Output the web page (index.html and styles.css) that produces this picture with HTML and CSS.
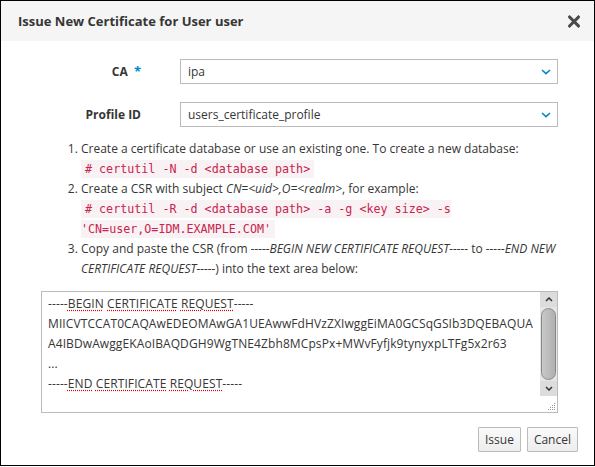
FILE: index.html
```html
<!DOCTYPE html>
<html>
<head>
<meta charset="utf-8">
<link rel="stylesheet" href="styles.css">
</head>
<body>
<div class="dialog">
  <div class="header">
    <h1 class="title">Issue New Certificate for User user</h1>
    <svg class="close" width="12" height="13" viewBox="0 0 12 13"><path d="M1.6 2.1 L10.4 10.9 M10.4 2.1 L1.6 10.9" stroke="#4a4a4a" stroke-width="3" stroke-linecap="square"/></svg>
  </div>
  <div class="body">
    <div class="row">
      <div class="label">CA <span class="req">*</span></div>
      <div class="select"><span>ipa</span><svg class="chev" width="10" height="6" viewBox="0 0 10 6"><path d="M1 1 L5 4.6 L9 1" fill="none" stroke="#0088ce" stroke-width="1.6"/></svg></div>
    </div>
    <div class="row">
      <div class="label">Profile ID</div>
      <div class="select"><span>users_certificate_profile</span><svg class="chev" width="10" height="6" viewBox="0 0 10 6"><path d="M1 1 L5 4.6 L9 1" fill="none" stroke="#0088ce" stroke-width="1.6"/></svg></div>
    </div>
    <ol class="steps">
      <li>Create a certificate database or use an existing one. To create a new database:<br><code># certutil -N -d &lt;database path&gt;</code></li>
      <li>Create a CSR with subject <em>CN=&lt;uid&gt;,O=&lt;realm&gt;</em>, for example:<br><code># certutil -R -d &lt;database path&gt; -a -g &lt;key size&gt; -s 'CN=user,O=IDM.EXAMPLE.COM'</code></li>
      <li>Copy and paste the CSR (from <em>-----BEGIN NEW CERTIFICATE REQUEST-----</em> to <em>-----END NEW CERTIFICATE REQUEST-----</em>) into the text area below:</li>
    </ol>
    <div class="textarea-wrap">
      <div class="textarea">
        <div>-----<span class="sp">BEGIN</span> <span class="sp">CERTIFICATE</span> <span class="sp">REQUEST</span>-----</div>
        <div>MIICVTCCAT0CAQAwEDEOMAwGA1UEAwwFdHVzZXIwggEiMA0GCSqGSIb3DQEBAQUA</div>
        <div>A4IBDwAwggEKAoIBAQDGH9WgTNE4Zbh8MCpsPx+MWvFyfjk9tynyxpLTFg5x2r63</div>
        <div>...</div>
        <div>-----<span class="sp">END</span> <span class="sp">CERTIFICATE</span> <span class="sp">REQUEST</span>-----</div>
      </div>
      <div class="scrollbar">
        <div class="sb-btn"><svg width="8" height="5" viewBox="0 0 8 5"><path d="M1 4 L4 1 L7 4" fill="none" stroke="#333" stroke-width="1.5"/></svg></div>
        <div class="sb-track"><div class="sb-thumb"></div></div>
        <div class="sb-btn"><svg width="8" height="5" viewBox="0 0 8 5"><path d="M1 1 L4 4 L7 1" fill="none" stroke="#333" stroke-width="1.5"/></svg></div>
        <div class="sb-corner"><svg width="8" height="8" viewBox="0 0 8 8"><g fill="#999"><rect x="6" y="0" width="1" height="1"/><rect x="4" y="2" width="1" height="1"/><rect x="6" y="2" width="1" height="1"/><rect x="2" y="4" width="1" height="1"/><rect x="4" y="4" width="1" height="1"/><rect x="6" y="4" width="1" height="1"/><rect x="0" y="6" width="1" height="1"/><rect x="2" y="6" width="1" height="1"/><rect x="4" y="6" width="1" height="1"/><rect x="6" y="6" width="1" height="1"/></g></svg></div>
      </div>
    </div>
  </div>
  <div class="footer">
    <button class="btn">Issue</button>
    <button class="btn">Cancel</button>
  </div>
</div>
</body>
</html>
```

FILE: styles.css
```css
* { box-sizing: border-box; }
html, body { margin: 0; padding: 0; background: #fff; }
body {
  font-family: "Open Sans", "Liberation Sans", sans-serif;
  font-size: 12px;
  line-height: 20px;
  color: #363636;
}
.dialog {
  width: 595px;
  height: 466px;
  border: 1px solid #000;
  display: flex;
  flex-direction: column;
}
.header {
  height: 40px;
  background: #f5f5f5;
  display: flex;
  align-items: center;
  justify-content: space-between;
  padding: 0 14px 0 17px;
  flex: none;
}
.title {
  margin: 0;
  font-size: 13px;
  font-weight: 700;
  color: #363636;
}
.close { display: block; }
.body {
  flex: 1;
  padding: 18px 36px 0 40px;
  display: flex;
  flex-direction: column;
}
.row {
  display: flex;
  align-items: center;
  margin-bottom: 18px;
}
.label {
  width: 139px;
  padding-right: 39px;
  text-align: right;
  font-weight: 700;
  white-space: nowrap;
}
.req { color: #0088ce; font-size: 13px; margin-left: 3px; }
.select {
  flex: 1;
  height: 25px;
  border: 1px solid #bbb;
  display: flex;
  align-items: center;
  justify-content: space-between;
  padding: 0 6px 0 7px;
  background: #fff;
}
.chev { display: block; }
.steps {
  margin: -6px 0 0 0;
  padding: 0 0 0 40px;
}
.steps li { padding-left: 0; }
code {
  font-family: "DejaVu Sans Mono", "Liberation Mono", monospace;
  font-size: 11.7px;
  color: #c7254e;
  background: #f9f2f4;
  padding: 2px 4px;
  line-height: 20px;
}
em { font-style: italic; }
.textarea-wrap {
  position: relative;
  margin-top: 12px;
  height: 122px;
  border: 1px solid #bbb;
}
.textarea {
  height: 100%;
  padding: 2px 20px 0 6px;
  overflow: hidden;
  white-space: nowrap;
  line-height: 20px;
  letter-spacing: 0.1px;
}
.sp {
  text-decoration: underline dotted #d00;
  text-underline-offset: 2px;
}
.scrollbar {
  position: absolute;
  top: 0;
  right: 0;
  width: 17px;
  height: 120px;
  background: #e6e6e6;
  display: flex;
  flex-direction: column;
  align-items: center;
}
.sb-btn {
  height: 15px;
  width: 17px;
  display: flex;
  align-items: center;
  justify-content: center;
  background: #dcdcdc;
}
.sb-track {
  flex: 1;
  width: 17px;
  padding: 1px 1px;
}
.sb-thumb {
  height: 100%;
  border: 1px solid #888;
  border-radius: 8px;
  background: linear-gradient(to right, #c8c8c8, #b0b0b0);
}
.sb-corner {
  height: 16px;
  width: 17px;
  background: #fff;
  display: flex;
  align-items: flex-end;
  justify-content: flex-end;
  padding: 0 1px 1px 0;
}
.footer {
  display: flex;
  justify-content: flex-end;
  gap: 6px;
  padding: 0 16px 13px 0;
}
.btn {
  font-family: "Open Sans", "Liberation Sans", sans-serif;
  font-size: 12px;
  color: #363636;
  height: 25px;
  padding: 0 6px;
  border: 1px solid #bbb;
  border-radius: 1px;
  background: linear-gradient(to bottom, #fafafa, #ededed);
}
```
